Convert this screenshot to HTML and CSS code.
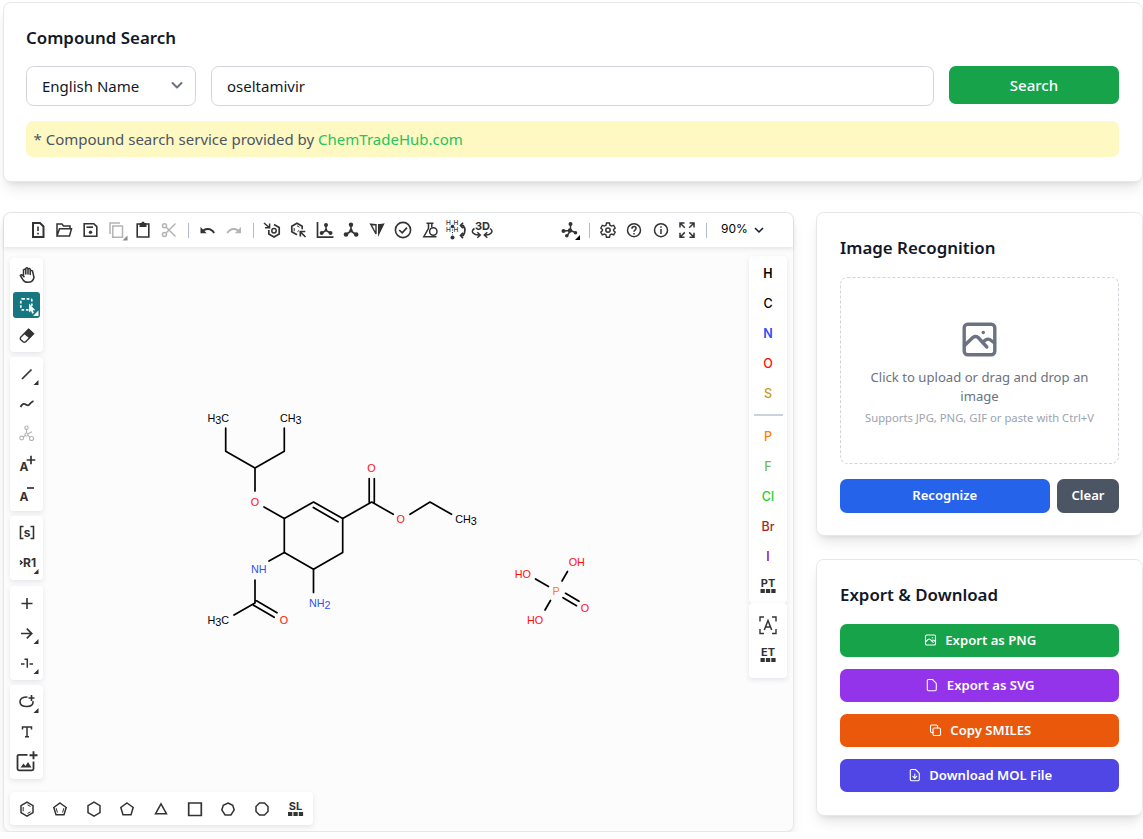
FILE: index.html
```html
<!DOCTYPE html>
<html lang="en">
<head>
  <meta charset="UTF-8" />
  <title>Compound Search</title>
  <link rel="stylesheet" href="styles.css">
</head>
<body>
  <div class="page">
    <section class="card search-card">
      <h2>Compound Search</h2>
      <form class="search-row">
        <div class="select">
          <span>English Name</span>
          <svg width="12" height="12" viewBox="0 0 12 12"><path d="M1.500 3 6 7.500 10.500 3" fill="none" stroke="#6b7280" stroke-width="2" stroke-linecap="round" stroke-linejoin="round"/></svg>
        </div>
        <input class="search-input" type="text" value="oseltamivir" />
        <button type="button" class="btn search-btn">Search</button>
      </form>
      <p class="note">* Compound search service provided by <a href="#">ChemTradeHub.com</a></p>
    </section>

    <div class="main">
      <section class="editor">
        <div class="toolbar">
          <button class="tool"><svg class="icon" viewBox="0 0 20 20"><path d="M5 3h7l3.500 3.500V17H5z" stroke-width="2"/><path d="M10 6.500v4.500M10 12.700v1.800" stroke-width="1.600"/></svg></button>
          <button class="tool"><svg class="icon" viewBox="0 0 20 20"><path d="M3 16V4h5l1.500 2H16v2.500M3 16 5.500 8.700H17.500L15.500 16z" stroke-width="1.500"/></svg></button>
          <button class="tool"><svg class="icon" viewBox="0 0 20 20"><path d="M3.200 3.700h9.600l3 3v9.600H3.200z" stroke-width="1.600"/><path d="M5.500 7.200h6.500" stroke-width="1.700"/><circle class="solid" cx="9.500" cy="12.300" r="1.700"/></svg></button>
          <button class="tool disabled"><svg class="icon" viewBox="0 0 20 20"><path d="M3 14V3h10M5.800 6h9.700v11.300H5.800z" stroke-width="1.500"/><path class="corner" d="M20.500 15.500v5h-5z"/></svg></button>
          <button class="tool"><svg class="icon" viewBox="0 0 20 20"><path d="M4.200 4h11.600v13H4.200z" stroke-width="1.600"/><path class="solid" d="M6.500 3h2a1.500 1.500 0 0 1 3 0h2v4h-7z"/></svg></button>
          <button class="tool disabled"><svg class="icon" viewBox="0 0 20 20"><circle cx="5.500" cy="5.700" r="2"/><circle cx="5.500" cy="14.500" r="2"/><path d="M7 7l9.500 9.500M7 13l9.500-9.500"/></svg></button>
          <span class="divider"></span>
          <button class="tool"><svg class="icon" viewBox="0 0 20 20"><path d="M3.500 12.500C7 7.500 13 8 16.200 13" stroke-width="1.900"/><path class="solid" d="M2.500 7v6.200h6.200z"/></svg></button>
          <button class="tool disabled"><svg class="icon" viewBox="0 0 20 20"><path d="M16 12.500C12.500 7.500 6.500 8 3.300 13" stroke-width="1.900"/><path class="solid" d="M17 7v6.200h-6.200z"/></svg></button>
          <span class="divider"></span>
          <button class="tool"><svg class="icon" viewBox="0 0 20 20"><path d="M12 4.600l5.200 3v6.300L12 17l-5.200-3V10" stroke-width="1.700"/><circle cx="12" cy="10.800" r="2.200"/><path d="M2 3l5.200 4.500M7.600 3.500v4.300H3" stroke-width="1.500"/></svg></button>
          <button class="tool"><svg class="icon" viewBox="0 0 20 20"><path d="M9 14.800l-5.200-3V6.200L9 3.200l5.200 3v3" stroke-width="1.700"/><path d="M11.500 7.200 9 5.800M6.200 8v3.200M11 10.500l-1.500 1.200" stroke-width="1"/><path d="M17.500 17l-5-5M12.300 16.500v-5h5" stroke-width="1.700"/></svg></button>
          <button class="tool"><svg class="icon" viewBox="0 0 20 20"><path d="M2.500 2v15.200H18.500" stroke-width="1.700"/><path d="M11 5v5.500L6.700 13M11 10.500l4.500 2.500"/><g class="solid"><circle cx="11" cy="5" r="2"/><circle cx="11" cy="10" r="1.300"/><circle cx="6.700" cy="13" r="2"/><circle cx="15.500" cy="13" r="2"/></g></svg></button>
          <button class="tool"><svg class="icon" viewBox="0 0 20 20"><path d="M10 5v6l-5 3.500M10 11l5 3.500" stroke-width="1.600"/><g class="solid"><circle cx="10" cy="4.800" r="2.200"/><circle cx="10" cy="10.500" r="1.700"/><circle cx="5" cy="14.500" r="2.300"/><circle cx="15.200" cy="14.500" r="2.300"/></g></svg></button>
          <button class="tool"><svg class="icon" viewBox="0 0 20 20"><path class="solid" d="M11 17V4q3.500.2 6.700-.8z"/><path d="M3.700 4.200Q6.500 4.700 9 4.700V14z" stroke-width="1.400"/></svg></button>
          <button class="tool"><svg class="icon" viewBox="0 0 20 20"><circle cx="10" cy="10" r="7.600" stroke-width="1.600"/><path d="M6.200 10l3 2.900 4.800-5.200" stroke-width="1.700"/></svg></button>
          <button class="tool"><svg class="icon" viewBox="0 0 20 20"><path d="M6.500 3.300h7M8.500 3.300v5L3.800 16.700H16.500M11.800 3.300v4" stroke-width="1.500"/><circle cx="13.300" cy="11.500" r="3.700" stroke-width="1.500"/></svg></button>
          <button class="tool"><svg class="icon" viewBox="0 0 20 20"><text x="0" y="4.500" class="tiny">H</text><text x="7.500" y="4.500" class="tiny">H</text><text x="0" y="12" class="tiny">H</text><text x="7.500" y="12" class="tiny">H</text><g class="solid"><circle cx="6.500" cy="6.500" r="1.800"/><circle cx="6.500" cy="17.500" r="2"/></g><path d="M6.500 7v8" stroke-dasharray="1 1.500" stroke-width="1"/><path d="M15 5.500h2.200q3.500 4.500 0 10h-2.200M17 2.700l-2.500 2.800 2.500 2.800M17 12.700l-2.500 2.800 2.500 2.800" stroke-width="1.700"/></svg></button>
          <button class="tool"><svg class="icon" viewBox="0 0 20 20"><text x="10.500" y="10" text-anchor="middle" class="t3d">3D</text><path d="M2.500 8.500c-5 3-.5 7 5 6.500M5.300 12.200 8.300 15l-3 2.800M18 8.500c4.500 3 .5 7-5 6.500M15.300 12.200 12.300 15l3 2.800"/></svg></button>

          <button class="tool tool-right"><svg class="icon" viewBox="0 0 20 20"><path d="M10.500 4v6.500L3.500 11M10.500 10.500l6 2.500M10.500 10.500 7 16" stroke-width="1.400"/><g class="solid"><circle cx="10.500" cy="4" r="2"/><circle cx="10" cy="10.500" r="2.200"/><circle cx="3.500" cy="11" r="2"/><circle cx="6.800" cy="15.700" r="1.800"/><circle cx="15.500" cy="12.700" r="1.800"/><path fill="#000" d="M20 15v5h-5z"/></g></svg></button>
          <span class="divider"></span>
          <button class="tool"><svg class="icon" viewBox="0 0 20 20"><path d="M8.500 3h3l.5 2.200 1.500.9 2.200-.7 1.500 2.600-1.600 1.500v1.200l1.600 1.500-1.500 2.600-2.200-.7-1.500.9-.5 2.200h-3L8 15l-1.500-.9-2.200.7-1.500-2.600 1.600-1.500V9.500L2.800 8l1.500-2.600 2.200.7L8 5.200z" stroke-width="1.400"/><circle cx="10" cy="10.100" r="2.200"/></svg></button>
          <button class="tool"><svg class="icon" viewBox="0 0 20 20"><circle cx="10" cy="10.200" r="6.500"/><path d="M7.900 8.800q0-2.300 2.200-2.300 2 0 2 1.800 0 1-1.100 1.800-1 .7-1 1.700M10 13v1.400"/></svg></button>
          <button class="tool"><svg class="icon" viewBox="0 0 20 20"><circle cx="10" cy="10.200" r="6.500"/><path d="M10 9v5M10 6.300v1.500"/></svg></button>
          <button class="tool"><svg class="icon" viewBox="0 0 20 20"><path d="M7.800 7.800 3.500 3.500M3 7.500V3h4.500M12.200 7.800l4.300-4.300M12.500 3H17v4.500M7.800 12.400l-4.300 4.300M3 12.700v4.500h4.500M12.200 12.400l4.300 4.300M17 12.700v4.500h-4.500"/></svg></button>
          <span class="divider"></span>
          <span class="zoom">90%</span>
          <svg class="icon" viewBox="0 0 20 20"><path d="M6 8l4 4 4-4"/></svg>
        </div>

        <div class="workspace">
          <div class="side left">
            <div class="group">
              <button class="tool"><svg class="icon" viewBox="0 0 20 20"><path d="M6.500 10.500V5q1.300-1.600 2.300 0V9 3.600q1.100-1.500 2.200 0V9 4.200q1.100-1.400 2.200 0V9.500 6q1.200-1.200 2.300 0L17 12.500Q16 17.300 11 17.300q-3.500 0-5-2.500L3.300 10.500q1.200-1.500 2.500 0l1.700 1.800" stroke-width="1.500" stroke-linejoin="round"/></svg></button>
              <button class="tool"><span class="active"><svg class="icon" viewBox="0 0 20 20"><rect x="3.800" y="3.800" width="11" height="11" rx="1.500" stroke-width="1.700" stroke-dasharray="2.600 1.800"/><path class="solid" d="M12 8.500v9l2-1.800 1.200 3 1.700-.8-1.200-2.700h2.600z"/><path class="corner" d="M21.500 15.500v5.500h-5.500z"/></svg></span></button>
              <button class="tool"><svg class="icon" viewBox="0 0 20 20"><path d="M3.500 12.500l8-8.300 5 4.500-8 8.300q-1.500.8-2.700-.4l-2-1.800q-1-1-.3-2.300z" stroke-width="1.400"/><path class="solid" d="M12 3.700l5 4.800-4.500 5-5.500-4.600z"/></svg></button>
            </div>
            <div class="group">
              <button class="tool"><svg class="icon" viewBox="0 0 20 20"><path d="M5 15l9.500-9.500" stroke-width="1.700"/><path class="corner" d="M21.500 16v5h-5z"/></svg></button>
              <button class="tool"><svg class="icon" viewBox="0 0 20 20"><path d="M3.500 13q2-4 4.200-3 4 2.700 5.300-.3 1-1.500 3.500-2.700" stroke-width="1.800"/></svg></button>
              <button class="tool disabled"><svg class="icon" viewBox="0 0 20 20"><circle cx="9.500" cy="3.700" r="1.700" stroke-width="1.100"/><circle cx="9.500" cy="10.500" r="1.500" stroke-width="1.100"/><circle cx="4.700" cy="14" r="1.900" stroke-width="1.100"/><circle cx="14.500" cy="14.500" r="2" stroke-width="1.100"/><path d="M9.500 5.500V9M8.200 11.500 6.200 13M11 11.500l2 1.500M11 9.800l4-2" stroke-width="1.100"/></svg></button>
              <button class="tool"><svg class="icon" viewBox="0 0 20 20"><text x="2.500" y="16.500" class="glyph">A</text><path d="M9.700 6h8.600M14 1.700v8.600" stroke-width="1.700"/></svg></button>
              <button class="tool"><svg class="icon" viewBox="0 0 20 20"><text x="2.500" y="16.500" class="glyph">A</text><path d="M10 4h7" stroke-width="1.700"/></svg></button>
            </div>
            <div class="group">
              <button class="tool"><svg class="icon" viewBox="0 0 20 20"><path d="M6.500 3.500h-3v12h3M13.500 3.500h3v12h-3" stroke-width="1.600"/><text x="10" y="13.500" text-anchor="middle" class="glyph-s">s</text></svg></button>
              <button class="tool"><svg class="icon" viewBox="0 0 20 20"><path d="M3 7.500l2 2-2 2" stroke-width="1.700"/><text x="6" y="13.500" class="glyph-r">R1</text><path class="corner" d="M21.500 16v5h-5z"/></svg></button>
            </div>
            <div class="group">
              <button class="tool"><svg class="icon" viewBox="0 0 20 20"><path d="M4.500 10.500h11M10 5v11" stroke-width="1.600"/></svg></button>
              <button class="tool"><svg class="icon" viewBox="0 0 20 20"><path d="M4 10.500h10.500M9.800 5.700l4.900 4.800-4.900 4.800" stroke-width="1.700"/><path class="corner" d="M21.500 16v5h-5z"/></svg></button>
              <button class="tool"><svg class="icon" viewBox="0 0 20 20"><path d="M4 11h3.500M12.500 11h3.500M7.500 6.300h2.800v8.500" stroke-width="1.500"/><path class="corner" d="M21.500 16v5h-5z"/></svg></button>
            </div>
            <div class="group">
              <button class="tool"><svg class="icon" viewBox="0 0 20 20"><path d="M10.500 5Q3 5 3 9.800q0 4.700 7 4.700 6.500 0 6-5.300" stroke-width="1.600"/><path d="M11.500 6h6M14.500 3v6" stroke-width="1.600"/><path class="corner" d="M21.500 16v5h-5z"/></svg></button>
              <button class="tool"><svg class="icon" viewBox="0 0 20 20"><path d="M5.500 7.500V5h9v2.500M10 5v9.800M8 14.800h4" stroke-width="1.500"/></svg></button>
              <button class="tool"><svg class="icon" viewBox="0 0 20 20"><path d="M10.500 2.800H2q-1.500 0-1.500 1.500v12.500q0 1.500 1.500 1.500h13q1.500 0 1.500-1.500V9.500" stroke-width="1.800"/><path class="solid" d="M3.500 15.500l3-4 2 2.500 2.500-4 3.500 5.500z"/><path d="M12.500 3.200h8M16.500-.8v8" stroke-width="1.900"/></svg></button>
            </div>
          </div>

          <!-- drawing canvas -->
          <svg class="canvas" width="706" height="545" viewBox="43 248 706 545">
            <g class="bonds">
              <path d="M225.700 428v23.300L255 468l29.300-16.700V428M255 468v23M264 507l20.300 11.500"/>
              <path d="M284.300 518.500 313.500 502l29.200 16.500v34l-29.200 16.800-29.200-16.800zM313.300 507.500l24.700 14.300"/>
              <path d="M342.700 518.500 371.700 502l21.500 12.300M369.200 478.500V502M374.300 478.500V502M410 514.300 430 502l21.500 12.300"/>
              <path d="M284.300 552.500 269 561M255 580v23l-21 12M256.500 600.800l20.500 12M253.500 605.300l20.700 12M313.500 569.300V592.500"/>
              <path d="M535.500 579l13 7.500M567.500 571.500l-5.500 9.500M550.500 600.500 545 610M565.500 593.300l13.500 8M563 597.700l13.500 8"/>
            </g>
            <g class="atoms">
              <text x="207.500" y="422">H<tspan dy="1.500">3</tspan><tspan dy="-1.500">C</tspan></text>
              <text x="280" y="422">CH<tspan dy="1.500">3</tspan></text>
              <text x="455.200" y="523">CH<tspan dy="1.500">3</tspan></text>
              <text x="207.500" y="624">H<tspan dy="1.500">3</tspan><tspan dy="-1.500">C</tspan></text>
              <g class="nitrogen">
                <text x="251" y="573">NH</text>
                <text x="309" y="607">NH<tspan dy="1.500">2</tspan></text>
              </g>
              <g class="oxygen">
                <text x="250.700" y="506">O</text>
                <text x="367.200" y="472">O</text>
                <text x="396.500" y="523">O</text>
                <text x="279.700" y="624">O</text>
                <text x="568.700" y="566">OH</text>
                <text x="514.700" y="578">HO</text>
                <text x="580.700" y="612">O</text>
                <text x="527" y="624">HO</text>
              </g>
              <text class="phosphorus" x="552.500" y="595">P</text>
            </g>
          </svg>

          <div class="side right">
            <div class="group elements">
              <button class="atom el-h">H</button>
              <button class="atom el-c">C</button>
              <button class="atom el-n">N</button>
              <button class="atom el-o">O</button>
              <button class="atom el-s">S</button>
              <hr>
              <button class="atom el-p">P</button>
              <button class="atom el-f">F</button>
              <button class="atom el-cl">Cl</button>
              <button class="atom el-br">Br</button>
              <button class="atom el-i">I</button>
              <button class="tool"><svg class="icon" viewBox="0 0 20 20"><text x="10" y="11" text-anchor="middle" class="glyph-t">PT</text><path class="solid" d="M2.500 13h4.300v4H2.500zM7.900 13h4.300v4H7.900zM13.300 13h4.300v4h-4.300z"/></svg></button>
            </div>
            <div class="group extra">
              <button class="tool"><svg class="icon" viewBox="0 0 20 20"><path d="M6 2H2v4.500M14 2h4v4.500M6 18.500H2V14M14 18.500h4V14" stroke-width="1.400"/><path d="M6.300 15 10 5.500l3.700 9.500M7.500 12h5"/></svg></button>
              <button class="tool"><svg class="icon" viewBox="0 0 20 20"><text x="10" y="11" text-anchor="middle" class="glyph-t">ET</text><path class="solid" d="M2.500 13h4.300v4H2.500zM7.900 13h4.300v4H7.900zM13.300 13h4.300v4h-4.300z"/></svg></button>
            </div>
          </div>
        </div>

        <div class="templates">
          <button class="tool"><svg class="icon" viewBox="0 0 20 20"><path d="M10 3.200l6 3.500v6.900l-6 3.500-6-3.500V6.700z"/><path d="M6.200 8v4.300M10.500 5.800l3 1.700M10.500 14.500l3-1.700" stroke-width="1"/></svg></button>
          <button class="tool"><svg class="icon" viewBox="0 0 20 20"><path d="M10 4l6.200 4.500L14 15.800H6L3.800 8.500z"/><path d="M6.200 9.200l1.200 4.300M13.800 9.200l-1.200 4.300" stroke-width="1"/></svg></button>
          <button class="tool"><svg class="icon" viewBox="0 0 20 20"><path d="M10 3.200l6 3.500v6.900l-6 3.500-6-3.500V6.700z"/></svg></button>
          <button class="tool"><svg class="icon" viewBox="0 0 20 20"><path d="M10 4l6.200 4.500L14 15.800H6L3.800 8.500z"/></svg></button>
          <button class="tool"><svg class="icon" viewBox="0 0 20 20"><path d="M10 4.800l5.500 10h-11z"/></svg></button>
          <button class="tool"><svg class="icon" viewBox="0 0 20 20"><path d="M3.700 4h12.600v12.500H3.700z" stroke-width="1.700"/></svg></button>
          <button class="tool"><svg class="icon" viewBox="0 0 20 20"><path d="M10 4l4.700 2.300 1.500 4.700-3.300 5H7.100l-3.300-5 1.500-4.700z"/></svg></button>
          <button class="tool"><svg class="icon" viewBox="0 0 20 20"><path d="M7.500 4h5l3.500 3.500v5L12.500 16h-5L4 12.500v-5z"/></svg></button>
          <button class="tool"><svg class="icon" viewBox="0 0 20 20"><text x="10.500" y="11" text-anchor="middle" class="glyph-t">SL</text><path class="solid" d="M3 13h4.300v4H3zM8.400 13h4.300v4H8.400zM13.800 13h4.300v4h-4.300z"/></svg></button>
        </div>
      </section>

      <aside class="sidebar">
        <section class="card">
          <h2>Image Recognition</h2>
          <div class="dropzone">
            <svg width="45" height="45" viewBox="0 0 45 45" class="upload-icon"><rect x="7.200" y="7.200" width="30.600" height="30.600" rx="3.500"/><path d="M7.500 28.500l8.300-8q2.700-2 5.400 0l8.600 9.500M25.800 25.500q3.500-4.500 7-3l4.700 3.500M26.200 15.500h.1"/></svg>
            <p class="drop-text">Click to upload or drag and drop an image</p>
            <p class="drop-hint">Supports JPG, PNG, GIF or paste with Ctrl+V</p>
          </div>
          <div class="actions">
            <button class="btn recognize">Recognize</button>
            <button class="btn clear">Clear</button>
          </div>
        </section>

        <section class="card">
          <h2>Export &amp; Download</h2>
          <div class="exports">
            <button class="btn png"><svg viewBox="0 0 15 15"><rect x="2.500" y="2" width="10" height="10" rx="1.300"/><path d="M2.500 9l2.700-2.600q1-.8 2 0l3 3M8.500 8q1.500-1.500 2.300-.7L12.500 8.500M9.200 4.700h.5"/></svg>Export as PNG</button>
            <button class="btn svg"><svg viewBox="0 0 15 15"><path d="M4.500 1.500h4L12.300 5.300v6.200q0 1.200-1.200 1.200H4.500q-1.200 0-1.200-1.200V2.700Q3.300 1.500 4.500 1.500z"/></svg>Export as SVG</button>
            <button class="btn smiles"><svg viewBox="0 0 15 15"><rect x="5" y="5" width="7.500" height="7.500" rx="1.200"/><path d="M5 9.500H3.700Q2.500 9.500 2.500 8.300V3.200Q2.500 2 3.700 2h4.600Q9.500 2 9.500 3.200V5"/></svg>Copy SMILES</button>
            <button class="btn mol"><svg viewBox="0 0 15 15"><path d="M4.500 1.500h4L12.300 5.300v6.200q0 1.200-1.200 1.200H4.500q-1.200 0-1.200-1.200V2.700Q3.300 1.500 4.500 1.500zM7.800 6v4.200M5.900 8.400l1.900 1.900 1.900-1.900"/></svg>Download MOL File</button>
          </div>
        </section>
      </aside>
    </div>
  </div>
</body>
</html>
```
FILE: styles.css
```css
html {
  font-size: 15px;
}
* {
  box-sizing: border-box;
}
body {
  margin: 0;
  font-family: "Noto Sans", sans-serif;
  font-size: 1rem;
  line-height: 1.5;
  color: #111827;
  background: #fff;
  overflow: hidden;
}
button {
  border: none;
  padding: 0;
  background: none;
  font: inherit;
  color: inherit;
}
p {
  margin: 0;
}
h2 {
  margin: 0 0 1rem;
  font-size: 1.125rem;
  line-height: 1.75rem;
  font-weight: 600;
}
.page {
  width: 1140px;
  margin: 2px 0 0 3px;
}
.card {
  padding: 22px 23px 23px;
  background: #fff;
  border: 1px solid #e5e7eb;
  border-radius: 0.5rem;
  box-shadow: 0 9px 14px -3px rgba(0, 0, 0, 0.1), 0 4px 6px -4px rgba(0, 0, 0, 0.1);
}
.search-card {
  height: 180px;
  padding: 21.5px 23px 0 22px;
}
.search-row {
  display: flex;
  align-items: flex-start;
  gap: 1rem;
  margin-bottom: 1rem;
}
.select,
.search-input {
  height: 40px;
  padding: 0 15px;
  border: 1px solid #d1d5db;
  border-radius: 0.5rem;
  background: #fff;
  font: inherit;
  color: #111827;
}
.select {
  width: 170px;
  display: flex;
  align-items: center;
  justify-content: space-between;
  padding-right: 12px;
}
.search-input {
  flex: 1;
}
.btn {
  display: flex;
  align-items: center;
  justify-content: center;
  height: 34px;
  border-radius: 0.45rem;
  font-size: 0.875rem;
  font-weight: 600;
  color: #fff;
}
.search-btn {
  width: 170px;
  height: 38px;
  font-size: 1rem;
  font-weight: 500;
  background: #16a34a;
}
.note {
  height: 36.5px;
  line-height: 36px;
  padding: 0 0.5rem;
  border-radius: 0.45rem;
  background: #fef9c3;
  color: #4b5563;
}
.note a {
  color: #22c55e;
  text-decoration: none;
}
.main {
  display: flex;
  align-items: flex-start;
  gap: 22px;
  margin-top: 30px;
}

/* editor */
.editor {
  width: 791px;
  height: 620px;
  border: 1px solid #e5e7eb;
  border-radius: 0.5rem;
  background: #fcfcfc;
  box-shadow: 0 9px 14px -3px rgba(0, 0, 0, 0.1), 0 4px 6px -4px rgba(0, 0, 0, 0.1);
}
.toolbar {
  display: flex;
  align-items: center;
  height: 34px;
  padding-left: 21px;
  background: #fff;
  border-radius: 7px 7px 0 0;
  box-shadow: 0 2px 4px rgba(103, 104, 132, 0.15);
}
.tool {
  display: flex;
  align-items: center;
  justify-content: center;
  flex: none;
  width: 26.25px;
  height: 30px;
  color: #333;
}
.tool-right {
  margin-left: 61.5px;
}
.disabled {
  color: #b4b4b4;
}
.divider {
  flex: none;
  width: 1px;
  height: 15px;
  margin: 0 5.5px;
  background: #b4b9d6;
}
.icon {
  flex: none;
  width: 20px;
  height: 20px;
  overflow: visible;
  fill: none;
  stroke: currentColor;
  stroke-width: 1.5;
}
.icon .solid,
.icon .corner {
  fill: currentColor;
  stroke: none;
}
.disabled .icon .corner {
  fill: #888;
}
.icon text {
  fill: currentColor;
  stroke: none;
  font-family: Inter, sans-serif;
  font-weight: 700;
}
.icon .tiny {
  font-size: 6.5px;
  font-weight: 500;
}
.icon .t3d {
  font-size: 11px;
}
.icon .glyph,
.icon .glyph-s,
.icon .glyph-r {
  font-size: 12px;
}
.icon .glyph-t {
  font-size: 11px;
}
.zoom {
  width: 28px;
  margin: -2px 0 0 9px;
  font-family: Inter, sans-serif;
  font-size: 12px;
  color: #000;
}
.workspace {
  display: flex;
  height: 545px;
}
.side .group {
  padding: 2px 0;
  background: #fff;
  border-radius: 4px;
  box-shadow: 0 2px 5px rgba(103, 104, 132, 0.15);
}
.left {
  display: flex;
  flex-direction: column;
  gap: 5.2px;
  width: 33px;
  margin: 11px 0 0 6px;
}
.side .tool,
.side .atom {
  display: flex;
  align-items: center;
  justify-content: center;
  width: 100%;
  height: 30px;
}
.active {
  display: flex;
  align-items: center;
  justify-content: center;
  width: 27px;
  height: 26px;
  border-radius: 3px;
  background: #167782;
  color: #fff;
}
.canvas {
  flex: none;
  margin-top: 1px;
}
.bonds {
  fill: none;
  stroke: #000;
  stroke-width: 1.7;
  stroke-linecap: round;
  stroke-linejoin: round;
}
.atoms {
  font-family: "Liberation Sans", Arial, sans-serif;
  font-size: 10.8px;
  fill: #000;
}
.nitrogen {
  fill: #304ff7;
}
.oxygen {
  fill: #ff0d0d;
}
.phosphorus {
  fill: #ff8000;
}
.right {
  width: 38px;
  margin-top: 9px;
}
.side .atom {
  padding-top: 2px;
  font-family: Inter, sans-serif;
  font-size: 12.5px;
  font-weight: 500;
}
.elements hr {
  width: 29px;
  height: 2px;
  margin: 6px auto 5px;
  border: none;
  background: #cad3dd;
}
.side .extra {
  padding: 7px 0 8px;
}
.side .el-h,
.side .el-n {
  font-weight: 600;
}
.el-h,
.el-c {
  color: #000;
}
.el-n {
  color: #304ff7;
}
.el-o {
  color: #ff0d0d;
}
.el-s {
  color: #c99a19;
}
.el-p {
  color: #ff8000;
}
.el-f {
  color: #78bc42;
}
.el-cl {
  color: #1fd01f;
}
.el-br {
  color: #a62929;
}
.el-i {
  color: #940094;
}
.templates {
  display: flex;
  align-items: center;
  width: 303px;
  height: 33px;
  margin-left: 6px;
  padding-right: 1px;
  background: #fff;
  border-radius: 4px;
  box-shadow: 0 2px 5px rgba(103, 104, 132, 0.15);
}
.templates .tool {
  flex: 1;
}

/* right column */
.sidebar {
  flex: 1;
  display: flex;
  flex-direction: column;
  gap: 23px;
}
.sidebar .card {
  padding-bottom: 22px;
}
.sidebar h2 {
  margin-bottom: 15.75px;
}
.dropzone {
  display: flex;
  flex-direction: column;
  align-items: center;
  justify-content: center;
  height: 187px;
  padding: 0 1.5rem;
  border: 1px dashed #d1d5db;
  border-radius: 0.5rem;
  text-align: center;
}
.upload-icon {
  fill: none;
  stroke: #6b7280;
  stroke-width: 3.4;
  stroke-linecap: round;
  stroke-linejoin: round;
}
.drop-text {
  margin-top: 6px;
  font-size: 0.875rem;
  line-height: 19px;
  color: #6b7280;
}
.drop-hint {
  margin-top: 4px;
  font-size: 0.75rem;
  line-height: 1rem;
  color: #9ca3af;
  white-space: nowrap;
}
.actions {
  display: flex;
  gap: 0.5rem;
  margin-top: 1rem;
}
.recognize {
  flex: 1;
  background: #2563eb;
}
.clear {
  width: 62px;
  background: #4b5563;
}
.exports {
  display: flex;
  flex-direction: column;
  gap: 12px;
  padding-bottom: 1px;
}
.exports .btn {
  height: 33px;
}
.exports svg {
  width: 15px;
  height: 15px;
  margin-right: 0.5rem;
  fill: none;
  stroke: #fff;
  stroke-width: 1.1;
  stroke-linecap: round;
  stroke-linejoin: round;
}
.png {
  background: #16a34a;
}
.svg {
  background: #9333ea;
}
.smiles {
  background: #ea580c;
}
.mol {
  background: #4f46e5;
}
```
